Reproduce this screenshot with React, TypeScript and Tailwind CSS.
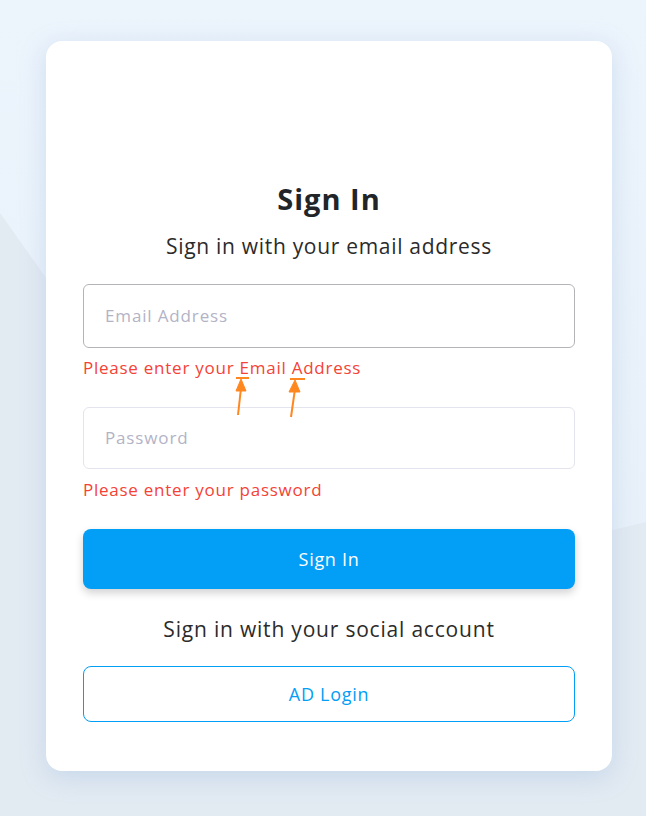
import React from 'react'

const font = { fontFamily: '"Open Sans", "Noto Sans", sans-serif' }

export default function App() {
  return (
    <div
      className="relative min-h-[816px] w-full overflow-hidden bg-gradient-to-b from-[#ecf4fc] to-[#e6eff8]"
      style={font}
    >
      {/* background shapes */}
      <svg className="absolute inset-0 h-full w-full" viewBox="0 0 646 816" preserveAspectRatio="none">
        <path d="M0,213 L90,340 L300,640 Q480,560 646,522 L646,816 L0,816 Z" fill="#e2eaf2" />
      </svg>

      <div className="relative ml-[46px] mt-[41px] flex h-[730px] w-[566px] flex-col rounded-2xl bg-white px-[37px] pt-[140px] shadow-[0_6px_24px_rgba(150,180,220,0.35)]">
        <h1 className="h-9 text-center text-[29px] font-bold leading-9 tracking-[1px] text-[#212529]">Sign In</h1>
        <p className="mt-[15px] h-7 text-center text-[21px] leading-7 tracking-[0.7px] text-[#2b2b2b]">
          Sign in with your email address
        </p>

        <div className="mt-6 flex h-16 items-center rounded-md border border-[#b4b4b8] px-[21px] text-[17px] tracking-[0.85px] text-[#b3b3c6]">
          Email Address
        </div>
        <div className="relative mt-2 h-6 text-[17px] leading-6 tracking-[0.75px] text-[#f44336]">
          Please enter your Email Address
          <svg className="absolute left-[148px] top-[18px] h-[44px] w-[80px] overflow-visible" viewBox="0 0 80 44">
            <g stroke="#ff8720" strokeWidth="2" fill="#ff8720">
              <line x1="5" y1="4" x2="18" y2="4" />
              <line x1="7" y1="41" x2="10" y2="14" />
              <polygon points="10,5 5,17 15,17" strokeWidth="1" />
              <line x1="59" y1="5" x2="74" y2="5" />
              <line x1="60" y1="43" x2="64" y2="15" />
              <polygon points="64,6 58,18 69,18" strokeWidth="1" />
            </g>
          </svg>
        </div>

        <div className="mt-[27px] flex h-[62px] items-center rounded-md border border-[#e4e4ee] px-[21px] text-[17px] tracking-[0.85px] text-[#b3b3c6]">
          Password
        </div>
        <div className="mt-[9px] h-6 text-[17px] leading-6 tracking-[0.75px] text-[#f44336]">Please enter your password</div>

        <button className="mt-[27px] h-[60px] rounded-lg bg-[#039ef6] text-[18px] tracking-[0.7px] text-white shadow-[0_4px_8px_rgba(0,0,0,0.18)]">
          Sign In
        </button>

        <p className="mt-[26px] h-7 text-center text-[21px] leading-7 tracking-[0.8px] text-[#2b2b2b]">
          Sign in with your social account
        </p>

        <button className="mt-[23px] h-14 rounded-lg border border-[#039ef6] bg-white text-[18px] tracking-[0.7px] text-[#039ef6]">
          AD Login
        </button>
      </div>
    </div>
  )
}
